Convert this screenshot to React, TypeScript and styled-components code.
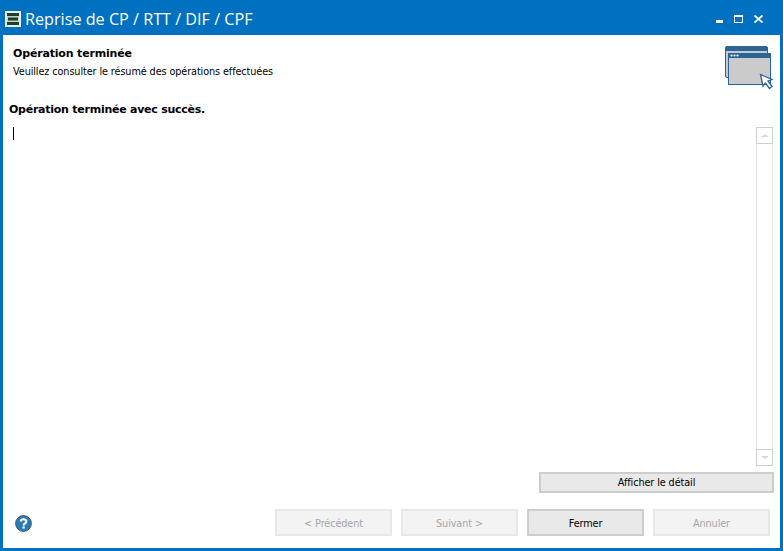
import React from 'react';
import styled, { createGlobalStyle } from 'styled-components';

const GlobalStyle = createGlobalStyle`
  html, body {
    margin: 0;
    padding: 0;
    background: #fff;
  }
`;

const Window = styled.div`
  width: 783px;
  height: 551px;
  box-sizing: border-box;
  border: 3px solid #0070c0;
  border-top-width: 0;
  display: flex;
  flex-direction: column;
  background: #fff;
  font-family: Tahoma, "DejaVu Sans", sans-serif;
  color: #000;
  overflow: hidden;
`;

const TitleBar = styled.div`
  height: 35px;
  flex: none;
  margin: 0 -3px;
  padding: 2px 20px 0 5px;
  box-sizing: border-box;
  background: #0070c0;
  display: flex;
  align-items: center;
`;

const Title = styled.div`
  margin-left: 4px;
  font-family: "Open Sans", sans-serif;
  font-size: 16.2px;
  color: #fff;
  white-space: nowrap;
  flex: 1;
`;

const WindowButtons = styled.div`
  display: flex;
  align-items: center;
  gap: 11px;
`;

const Header = styled.div`
  height: 52px;
  flex: none;
  padding: 11px 5px 0 10px;
  box-sizing: border-box;
  display: flex;
  justify-content: space-between;
`;

const HeaderTitle = styled.div`
  font-size: 11px;
  font-weight: 700;
  line-height: 16px;
  letter-spacing: -0.17px;
`;

const HeaderText = styled.div`
  margin-top: 4px;
  font-size: 9.7px;
  line-height: 12px;
  letter-spacing: -0.01em;
`;

const Status = styled.div`
  margin-top: 15px;
  padding-left: 6px;
  font-size: 11px;
  font-weight: 700;
  line-height: 16px;
  letter-spacing: -0.25px;
`;

const Body = styled.div`
  flex: 1;
  min-height: 0;
  margin-top: 3px;
  padding: 6px 7px 0 10px;
  display: flex;
  justify-content: space-between;
`;

const Caret = styled.div`
  width: 1px;
  height: 13px;
  background: #000;
`;

const ScrollBar = styled.div`
  width: 17px;
  box-sizing: border-box;
  border: 1px solid #e6e6e6;
  border-top: 0;
  border-bottom: 0;
  display: flex;
  flex-direction: column;
  justify-content: space-between;
`;

const ScrollArrow = styled.div<{ $down?: boolean }>`
  height: 17px;
  margin: 0 -1px;
  border: 1px solid #cfcfcf;
  box-sizing: border-box;
  display: flex;
  align-items: center;
  justify-content: center;

  &::before {
    content: '';
    border-left: 4px solid transparent;
    border-right: 4px solid transparent;
    ${(p) => (p.$down ? 'border-top: 3px solid #d8d8d8;' : 'border-bottom: 3px solid #d8d8d8;')}
  }
`;

const DetailRow = styled.div`
  flex: none;
  margin-top: 6px;
  padding-right: 6px;
  display: flex;
  justify-content: flex-end;
`;

const Button = styled.button<{ $disabled?: boolean; $width?: number }>`
  width: ${(p) => p.$width ?? 117}px;
  box-sizing: border-box;
  padding: 1px 0 0;
  font-family: Tahoma, "DejaVu Sans", sans-serif;
  font-size: 9.7px;
  letter-spacing: -0.01em;
  color: ${(p) => (p.$disabled ? '#a5a5a5' : '#000')};
  background: ${(p) => (p.$disabled ? '#f3f3f3' : '#e9e9e9')};
  border: ${(p) => (p.$disabled ? '2px solid #e8e8e8' : '2px solid #cdcdcd')};
`;

const DetailButton = styled(Button)`
  height: 21px;
  padding-top: 0;
`;

const Footer = styled.div`
  flex: none;
  height: 55px;
  padding: 16px 10px 0 12px;
  box-sizing: border-box;
  display: flex;
  align-items: flex-start;
`;

const FooterButtons = styled.div`
  margin-left: auto;
  display: flex;
  gap: 9px;

  ${Button} {
    height: 27px;
  }
`;

const HelpIcon = styled.svg`
  margin-top: 6px;
`;

const AppIcon = () => (
  <svg width="16" height="16" viewBox="0 0 16 16">
    <rect width="16" height="16" fill="#e9efea" />
    <rect x="2" y="2" width="12" height="12" fill="#c5d2c8" />
    <rect x="2" y="2" width="12" height="3" fill="#1d3f2d" />
    <rect x="3" y="6.5" width="10" height="3" fill="#1d3f2d" />
    <rect x="2" y="11" width="12" height="3" fill="#1d3f2d" />
  </svg>
);

const MinimizeIcon = () => (
  <svg width="7" height="8" viewBox="0 0 7 8">
    <rect x="0" y="5" width="7" height="3" fill="#fff" />
  </svg>
);

const MaximizeIcon = () => (
  <svg width="9" height="8" viewBox="0 0 9 8">
    <rect x="0.5" y="1" width="8" height="6.5" fill="none" stroke="#fff" strokeWidth="1" />
    <rect x="0" y="0" width="9" height="2" fill="#fff" />
  </svg>
);

const CloseIcon = () => (
  <svg width="9" height="8" viewBox="0 0 9 8">
    <path d="M0.5 0.5 L8.5 7.5 M8.5 0.5 L0.5 7.5" stroke="#fff" strokeWidth="1.8" />
  </svg>
);

const WindowsIcon = () => (
  <svg width="50" height="44" viewBox="0 0 50 44">
    <rect x="0.5" y="0.5" width="42" height="31" rx="1.5" fill="#c9c9c9" stroke="#2a6499" />
    <rect x="0.5" y="0" width="42" height="5" rx="1.5" fill="#2a6499" />
    <rect x="3.5" y="7.5" width="42" height="31" fill="#cbcbcb" stroke="#2a6499" />
    <rect x="3" y="7" width="43" height="5" fill="#2a6499" />
    <circle cx="6.5" cy="9.5" r="1.1" fill="#fff" />
    <circle cx="9.5" cy="9.5" r="1.1" fill="#fff" />
    <circle cx="12.5" cy="9.5" r="1.1" fill="#fff" />
    <path d="M35.5 28.5 L38 40 L40.5 37 L44.5 42.5 L47 40.5 L43 35 L47 33.5 Z" fill="#fff" stroke="#2a6499" strokeWidth="1.3" />
  </svg>
);

const QuestionIcon = () => (
  <HelpIcon width="17" height="17" viewBox="0 0 17 17">
    <circle cx="8.5" cy="8.5" r="7.9" fill="#2a7ab8" stroke="#4a5a6a" strokeWidth="1" />
    <path d="M5.8 6.6 C5.8 3.6 11.4 3.6 11.4 6.5 C11.4 8.4 8.6 8.4 8.6 10.4" fill="none" stroke="#fff" strokeWidth="2" />
    <rect x="7.5" y="11.4" width="2.2" height="2.2" fill="#fff" />
  </HelpIcon>
);

const App: React.FC = () => {
  return (
    <>
      <GlobalStyle />
      <Window>
        <TitleBar>
          <AppIcon />
          <Title>Reprise de CP / RTT / DIF / CPF</Title>
          <WindowButtons>
            <MinimizeIcon />
            <MaximizeIcon />
            <CloseIcon />
          </WindowButtons>
        </TitleBar>
        <Header>
          <div>
            <HeaderTitle>Opération terminée</HeaderTitle>
            <HeaderText>Veuillez consulter le résumé des opérations effectuées</HeaderText>
          </div>
          <WindowsIcon />
        </Header>
        <Status>Opération terminée avec succès.</Status>
        <Body>
          <Caret />
          <ScrollBar>
            <ScrollArrow />
            <ScrollArrow $down />
          </ScrollBar>
        </Body>
        <DetailRow>
          <DetailButton $width={235}>Afficher le détail</DetailButton>
        </DetailRow>
        <Footer>
          <QuestionIcon />
          <FooterButtons>
            <Button $disabled>&lt; Précédent</Button>
            <Button $disabled>Suivant &gt;</Button>
            <Button>Fermer</Button>
            <Button $disabled>Annuler</Button>
          </FooterButtons>
        </Footer>
      </Window>
    </>
  );
};

export default App;
